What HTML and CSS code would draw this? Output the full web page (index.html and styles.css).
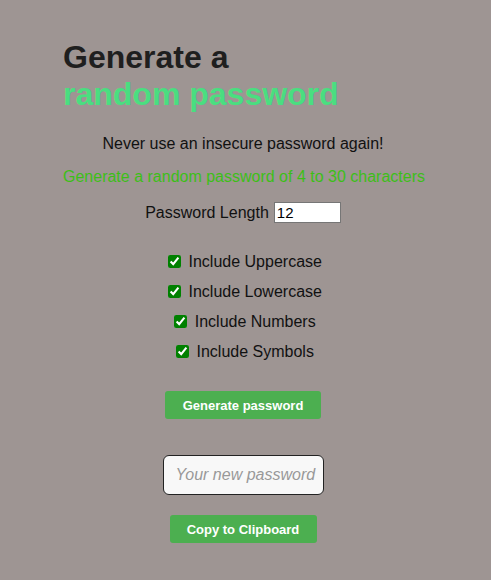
FILE: index.html
```html
<!DOCTYPE html>
<html lang="en">
<head>
<meta charset="utf-8">
<title>Password Generator</title>
<link rel="stylesheet" href="styles.css">
</head>
<body>
<main class="container">
  <h1 class="title">Generate a<span class="accent">random password</span></h1>
  <p class="tagline">Never use an insecure password again!</p>
  <p class="sub">Generate a random password of 4 to 30 characters</p>
  <div class="length-row">
    <label for="len" class="length-label">Password Length</label>
    <input id="len" class="length-input" type="number" value="12">
  </div>
  <div class="options">
    <div class="option"><label><input type="checkbox" class="check" checked> Include Uppercase</label></div>
    <div class="option"><label><input type="checkbox" class="check" checked> Include Lowercase</label></div>
    <div class="option"><label><input type="checkbox" class="check" checked> Include Numbers</label></div>
    <div class="option"><label><input type="checkbox" class="check" checked> Include Symbols</label></div>
  </div>
  <div class="center">
    <button class="btn btn-generate">Generate password</button>
  </div>
  <div class="center">
    <input class="output" type="text" placeholder="Your new password" readonly>
  </div>
  <div class="center">
    <button class="btn btn-copy">Copy to Clipboard</button>
  </div>
</main>
</body>
</html>
```

FILE: styles.css
```css
html, body {
  margin: 0;
  padding: 0;
}
body {
  background: #9e9593;
  font-family: "Liberation Sans", Arial, sans-serif;
  color: #111;
  min-height: 580px;
}
.container {
  width: 360px;
  margin-left: 63px;
  padding-top: 39px;
}
.title {
  margin: 0;
  font-size: 32px;
  line-height: 37px;
  font-weight: 700;
  color: #1f1f1f;
}
.accent {
  display: block;
  color: #4ade80;
}
.tagline {
  margin: 22px 0 0;
  font-size: 16px;
  line-height: 18px;
  text-align: center;
}
.sub {
  margin: 15px 0 0;
  font-size: 16px;
  line-height: 18px;
  text-align: center;
  white-space: nowrap;
  color: #3cbf17;
}
.length-row {
  margin-top: 16px;
  height: 21px;
  display: flex;
  align-items: center;
  justify-content: center;
  gap: 5px;
  font-size: 16px;
}
.length-input {
  box-sizing: border-box;
  width: 67px;
  height: 21px;
  margin: 0;
  padding: 1px 2px;
  border: 1px solid #767676;
  background: #fff;
  font-family: "Liberation Sans", Arial, sans-serif;
  font-size: 15px;
  color: #000;
  -moz-appearance: textfield;
}
.length-input::-webkit-inner-spin-button,
.length-input::-webkit-outer-spin-button {
  -webkit-appearance: none;
  margin: 0;
}
.options {
  margin-top: 24px;
}
.option {
  height: 30px;
  line-height: 30px;
  text-align: center;
  font-size: 16px;
}
.check {
  accent-color: #008000;
  width: 13px;
  height: 13px;
  vertical-align: -1px;
  margin: 0 3px 0 4px;
}
.center {
  display: flex;
  justify-content: center;
}
.btn {
  border: none;
  border-radius: 3px;
  background: #4caf50;
  color: #fff;
  font-family: "Liberation Sans", Arial, sans-serif;
  font-weight: 700;
  font-size: 13px;
  height: 28px;
  padding: 0;
  white-space: nowrap;
  cursor: pointer;
}
.btn-generate {
  margin-top: 24px;
  width: 156px;
}
.btn-copy {
  margin-top: 20px;
  width: 147px;
}
.output {
  box-sizing: border-box;
  margin-top: 36px;
  width: 161px;
  height: 40px;
  padding: 0 4px 0 12px;
  border: 1px solid #222;
  border-radius: 6px;
  background: #f8f8f8;
  font-family: "Liberation Sans", Arial, sans-serif;
  font-size: 16px;
  font-style: italic;
  color: #333;
}
.output::placeholder {
  color: #999;
  font-style: italic;
}
```
